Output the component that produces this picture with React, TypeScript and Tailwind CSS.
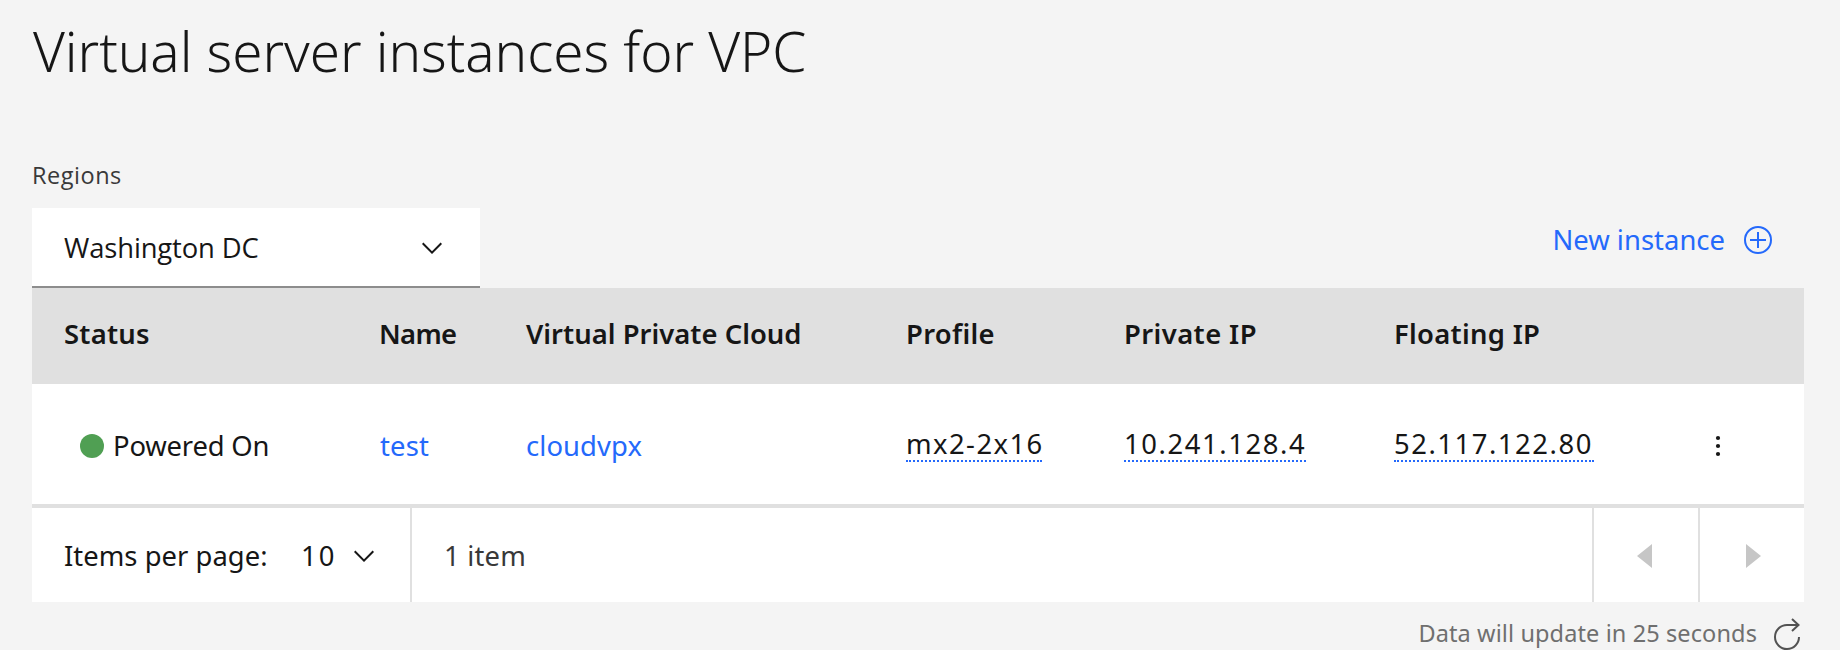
import React from 'react';

const headerCell = 'pt-[30px] leading-8 whitespace-nowrap';
const columns = 'grid grid-cols-[316px_146px_380px_218px_270px_288px_1fr]';

function ChevronDown() {
  return (
    <svg className="block size-8 shrink-0" viewBox="0 0 16 16" fill="#161616">
      <path d="M8 11 3 6l.7-.7L8 9.6l4.3-4.3.7.7z" />
    </svg>
  );
}

function Dotted({ children, className }: { children: React.ReactNode; className: string }) {
  return (
    <span className={`block h-[34px] overflow-visible border-b-2 border-dotted border-[#2469fb] leading-8 whitespace-nowrap ${className}`}>
      {children}
    </span>
  );
}

export default function App() {
  return (
    <div className="h-[650px] w-full overflow-hidden bg-[#f4f4f4] pt-[19px] pr-9 pl-8 font-['Noto_Sans',sans-serif] text-[27.4px] text-[#161616]">
      <h1 className="h-16 pl-px text-[54.8px] leading-[64px] font-light tracking-[-0.04px] whitespace-nowrap">
        Virtual server instances for VPC
      </h1>

      <div className="mt-[76px] h-8 font-['Open_Sans',sans-serif] text-[23.5px] leading-8 tracking-[0.52px] text-[#393939]">
        Regions
      </div>

      <div className="mt-[17px] flex h-20 justify-between">
        <button className="flex w-[448px] items-start justify-between border-b-2 border-[#8d8d8d] bg-white pt-6 pr-8 pl-8 text-left">
          <span className="font-['Open_Sans',sans-serif] leading-8 tracking-[-0.12px]">Washington DC</span>
          <ChevronDown />
        </button>
        <a className="mr-[30px] flex items-start gap-[17px] pt-4 leading-8 tracking-[0.03px] text-[#2469fb]">
          New instance
          <svg className="block size-8" viewBox="0 0 32 32" fill="none" stroke="#2469fb" strokeWidth="2">
            <circle cx="16" cy="16" r="13" />
            <path d="M16 8v16M8 16h16" />
          </svg>
        </a>
      </div>

      <div className={`${columns} h-24 bg-[#e0e0e0] pl-8 font-semibold`}>
        <div className={`${headerCell} tracking-[0.25px]`}>Status</div>
        <div className={`${headerCell} -ml-px tracking-[-0.67px]`}>Name</div>
        <div className={`${headerCell} tracking-[0.03px]`}>Virtual Private Cloud</div>
        <div className={`${headerCell} tracking-[0.3px]`}>Profile</div>
        <div className={`${headerCell} tracking-[0.42px]`}>Private IP</div>
        <div className={`${headerCell} tracking-[0.29px]`}>Floating IP</div>
      </div>

      <div className={`${columns} h-[124px] border-b-4 border-[#e0e0e0] bg-white pl-8 leading-8`}>
        <div className="flex items-start gap-[9px] pt-[46px] pl-4 tracking-[-0.18px]">
          <span className="mt-1 size-6 rounded-full bg-[#509f53]" />
          Powered On
        </div>
        <div className="pt-[46px] tracking-[0.2px] text-[#2469fb]">test</div>
        <div className="pt-[46px] tracking-[0.1px] text-[#2469fb]">cloudvpx</div>
        <div className="pt-11">
          <Dotted className="w-[136px] tracking-[1.45px]">mx2-2x16</Dotted>
        </div>
        <div className="pt-11">
          <Dotted className="w-[182px] tracking-[1.61px]">10.241.128.4</Dotted>
        </div>
        <div className="pt-11">
          <Dotted className="w-[200px] tracking-[1.55px]">52.117.122.80</Dotted>
        </div>
        <div className="pt-[46px] pl-4">
          <svg className="block size-8" viewBox="0 0 32 32" fill="#161616">
            <circle cx="20" cy="8" r="2.1" />
            <circle cx="20" cy="16" r="2.1" />
            <circle cx="20" cy="24" r="2.1" />
          </svg>
        </div>
      </div>

      <div className="flex h-[94px] bg-white leading-8">
        <div className="flex w-[380px] border-r-2 border-[#e0e0e0] pt-8 pl-8">
          <span className="w-[237px] whitespace-nowrap tracking-[0.03px]">Items per page:</span>
          <span className="w-[47px] tracking-[2px]">10</span>
          <ChevronDown />
        </div>
        <div className="flex-1 pt-8 pl-8 tracking-[0.2px] text-[#393939]">1 item</div>
        <div className="w-[108px] border-x-2 border-[#e0e0e0] pt-9 pl-[43px]">
          <svg className="block h-6 w-[15px]" viewBox="0 0 10 16" fill="#c6c6c6">
            <path d="M10 0v16L0 8z" />
          </svg>
        </div>
        <div className="w-[104px] pt-9 pl-[46px]">
          <svg className="block h-6 w-[15px]" viewBox="0 0 10 16" fill="#c6c6c6">
            <path d="M0 0v16l10-8z" />
          </svg>
        </div>
      </div>

      <div className="flex h-12 justify-end gap-[11px] pt-[15px] text-[23.5px] leading-8 tracking-[0.11px] text-[#6f6f6f]">
        Data will update in 25 seconds
        <svg className="block size-9" viewBox="0 0 36 36" fill="none" stroke="#525252" strokeWidth="2">
          <path d="M31 20a12 12 0 1 1-12-12h12" />
          <path d="m24 2 6.5 6-6.5 6" />
        </svg>
      </div>
    </div>
  );
}
